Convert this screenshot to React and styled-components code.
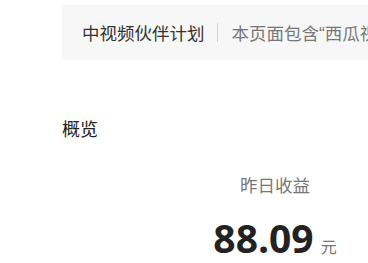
import React from 'react'
import styled, { createGlobalStyle } from 'styled-components'

const GlobalStyle = createGlobalStyle`
  html, body {
    margin: 0;
    padding: 0;
    background: #fff;
    overflow: hidden;
  }
  body {
    font-family: "Liberation Sans", "Noto Sans CJK SC", sans-serif;
  }
`

const Page = styled.div`
  padding: 5px 0 0 62px;
  width: 900px;
`

const Banner = styled.div`
  display: flex;
  align-items: center;
  height: 55px;
  padding-left: 20px;
  background: #f7f7f7;
  white-space: nowrap;
  font-size: 17.5px;
`

const BannerTitle = styled.span`
  color: #333;
`

const Divider = styled.span`
  width: 1px;
  height: 19px;
  margin: 0 14px 0 12px;
  background: #d4d4d4;
`

const BannerNote = styled.span`
  color: #777;
`

const SectionTitle = styled.h2`
  margin: 58px 0 0;
  font-size: 18px;
  font-weight: 400;
  line-height: 24px;
  color: #222;
`

const StatRow = styled.div`
  display: flex;
  padding-left: 113px;
  margin-top: 32px;
`

const StatCard = styled.div`
  width: 200px;
  display: flex;
  flex-direction: column;
  align-items: center;
`

const StatLabel = styled.div`
  font-size: 17.5px;
  line-height: 24px;
  color: #777;
`

const StatValue = styled.div`
  display: flex;
  align-items: baseline;
  margin-top: 22px;
`

const Amount = styled.span`
  font-family: "Open Sans", "Noto Sans", sans-serif;
  font-size: 39px;
  font-weight: 700;
  line-height: 36px;
  color: #222;
`

const Unit = styled.span`
  margin-left: 7px;
  font-size: 16px;
  line-height: 20px;
  color: #777;
`

export default function App() {
  return (
    <>
      <GlobalStyle />
      <Page>
        <Banner>
          <BannerTitle>中视频伙伴计划</BannerTitle>
          <Divider />
          <BannerNote>本页面包含“西瓜视频”收益数据</BannerNote>
        </Banner>
        <SectionTitle>概览</SectionTitle>
        <StatRow>
          <StatCard>
            <StatLabel>昨日收益</StatLabel>
            <StatValue>
              <Amount>88.09</Amount>
              <Unit>元</Unit>
            </StatValue>
          </StatCard>
        </StatRow>
      </Page>
    </>
  )
}
